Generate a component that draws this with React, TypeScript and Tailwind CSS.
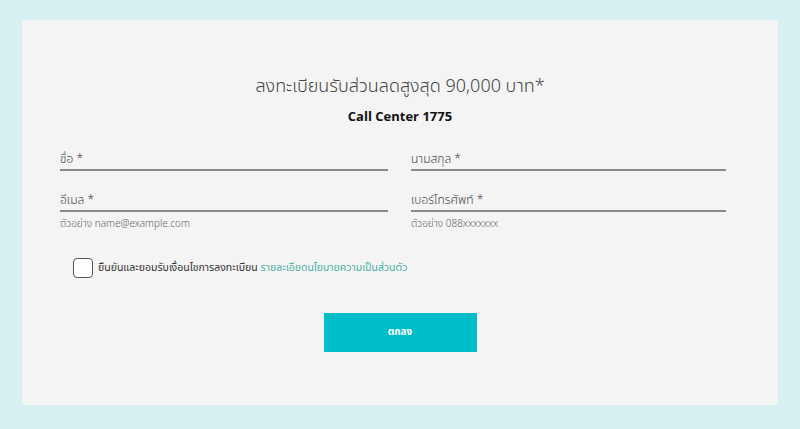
import React from "react";

const Field = ({
  label,
  hint,
  className,
}: {
  label: string;
  hint?: string;
  className?: string;
}) => (
  <div className={className}>
    <div className="border-b-2 border-[#8a8a8a] pb-[2px] text-[12px] font-light leading-[16px] text-[#444]">
      {label}
    </div>
    {hint && <div className="mt-[6px] text-[10px] font-light leading-[12px] text-[#666]">{hint}</div>}
  </div>
);

const App = () => {
  return (
    <div
      className="min-h-[429px] w-[800px] bg-[#d7f1f3] px-[22px] pt-[20px] pb-[24px]"
      style={{ fontFamily: "'Noto Sans Thai', 'Noto Sans Thai UI', 'Noto Sans', 'Liberation Sans', sans-serif" }}
    >
      <div className="h-[385px] w-[756px] bg-[#f4f4f4] pt-[55px]">
        <h1 className="text-center text-[18px] font-light leading-[24px] text-[#444]">
          ลงทะเบียนรับส่วนลดสูงสุด 90,000 บาท*
        </h1>
        <p className="mt-[10px] text-center text-[13px] font-bold leading-[16px] text-[#111]">
          Call Center 1775
        </p>

        <div className="mt-[26px] flex gap-[23px] pl-[38px]">
          <Field label="ชื่อ *" className="w-[328px]" />
          <Field label="นามสกุล *" className="w-[315px]" />
        </div>
        <div className="mt-[21px] flex gap-[23px] pl-[38px]">
          <Field label="อีเมล *" hint="ตัวอย่าง name@example.com" className="w-[328px]" />
          <Field label="เบอร์โทรศัพท์ *" hint="ตัวอย่าง 088xxxxxxx" className="w-[315px]" />
        </div>

        <label className="mt-[28px] flex items-center gap-[5px] pl-[51px] text-[10.5px] leading-[20px] text-[#333]">
          <span className="h-[20px] w-[20px] shrink-0 rounded-[4px] border border-[#555] bg-white" />
          <span>
            ยืนยันและยอมรับเงื่อนไขการลงทะเบียน{" "}
            <a className="text-[#4ab0a6]" href="#">
              รายละเอียดนโยบายความเป็นส่วนตัว
            </a>
          </span>
        </label>

        <div className="mt-[35px] flex justify-center">
          <button className="h-[39px] w-[153px] bg-[#00bdca] text-[10px] font-bold text-white">
            ตกลง
          </button>
        </div>
      </div>
    </div>
  );
};

export default App;
